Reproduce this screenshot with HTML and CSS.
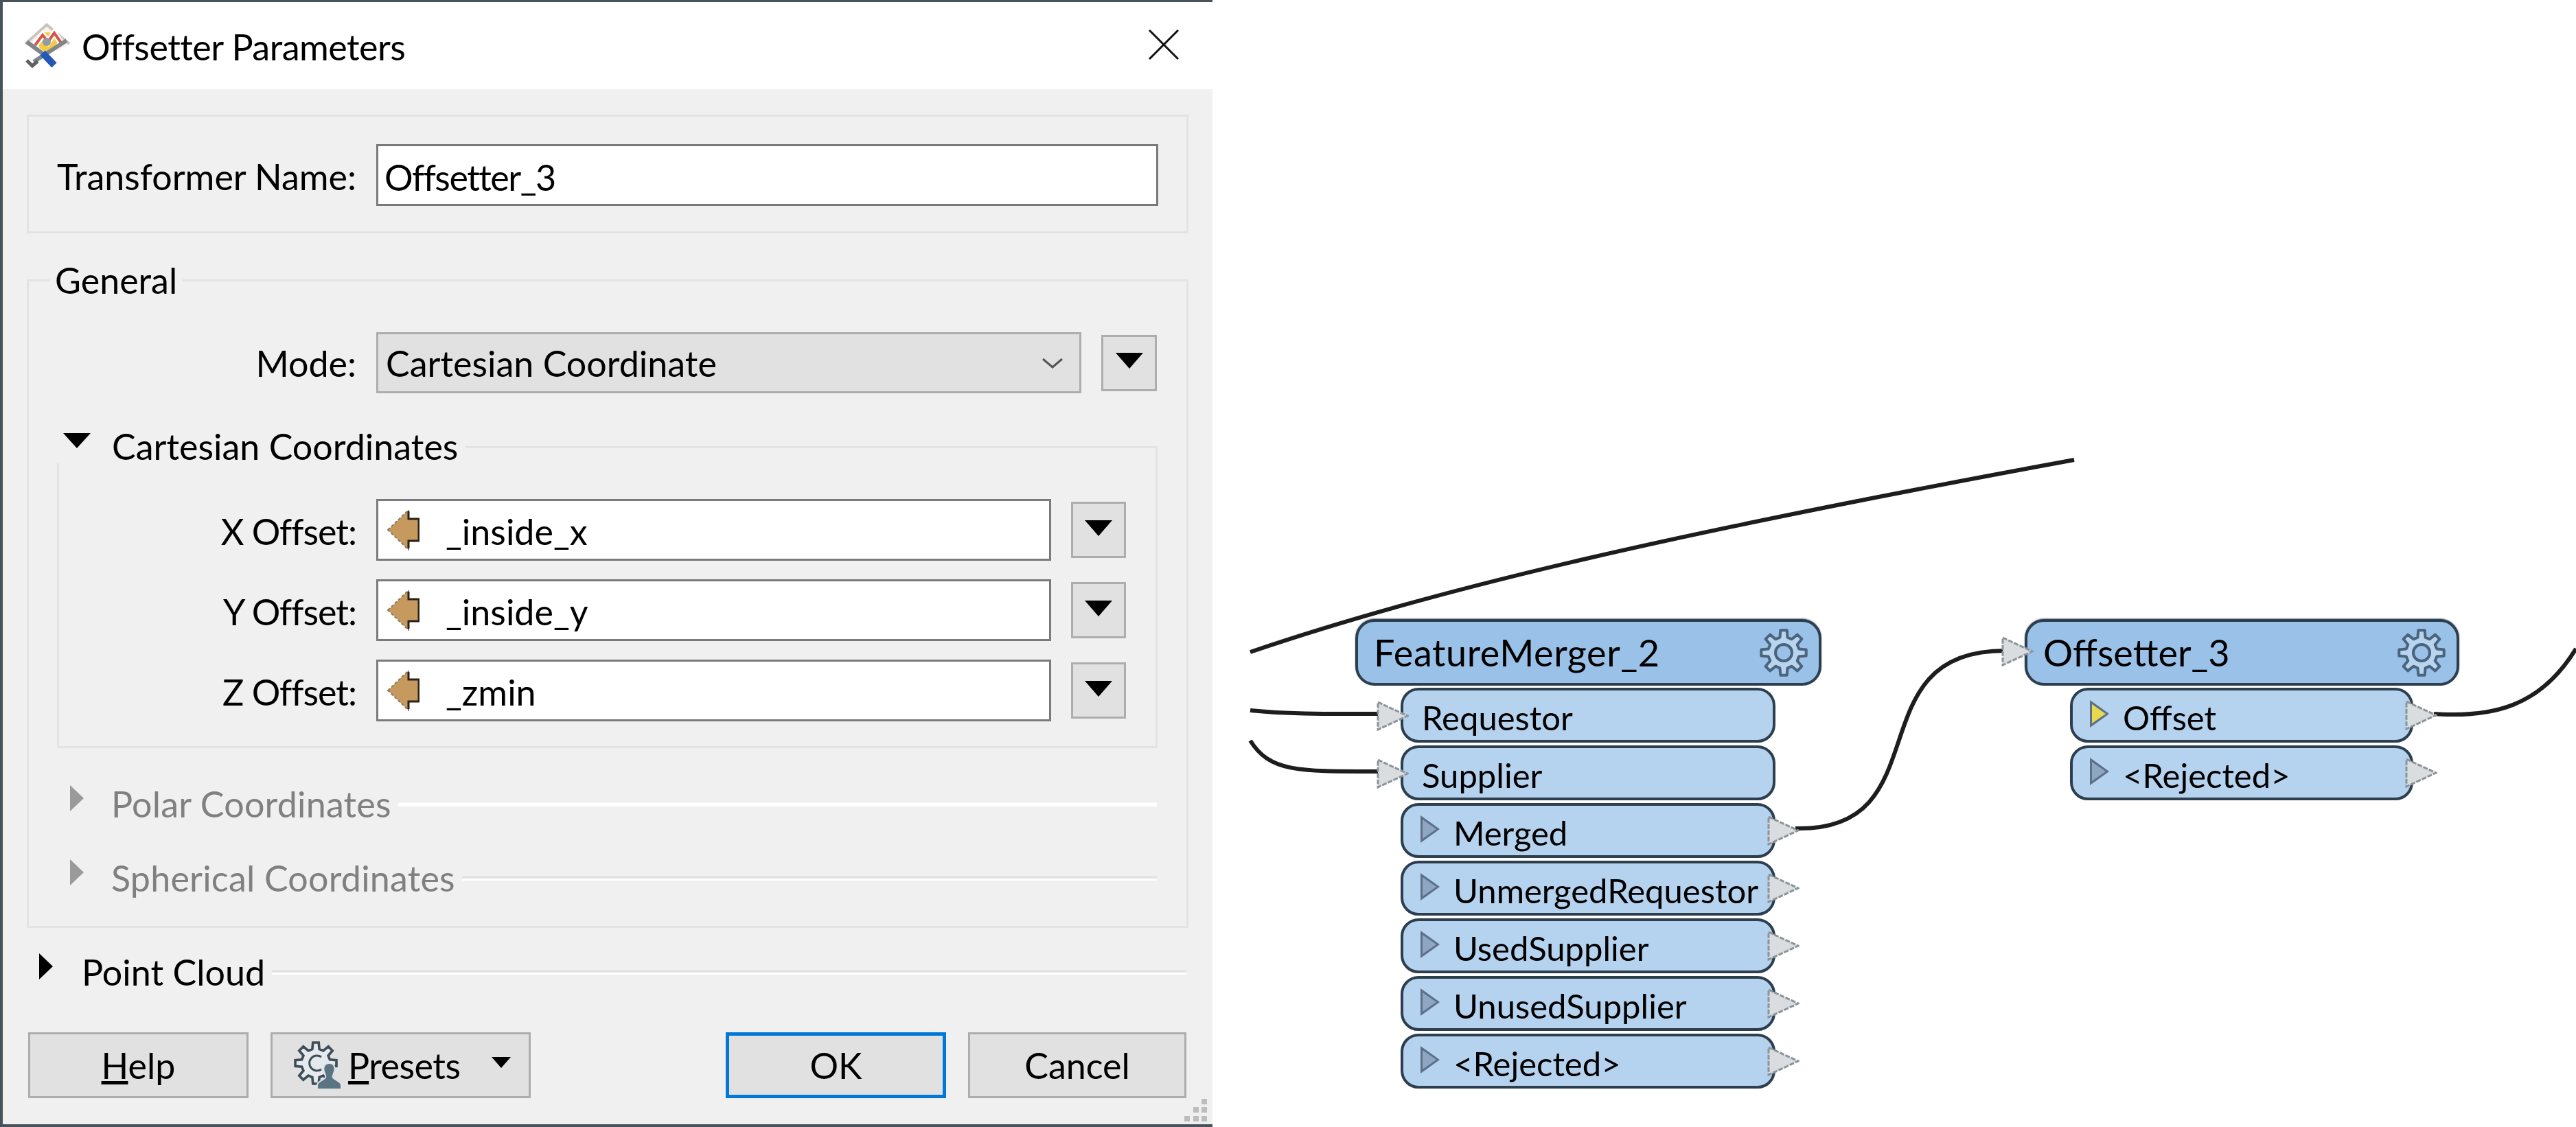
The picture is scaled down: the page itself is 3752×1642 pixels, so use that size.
FILE: index.html
```html
<!DOCTYPE html>
<html lang="en">
<head>
    <meta charset="UTF-8">
    <meta name="viewport" content="width=device-width, initial-scale=1.0">
    <title>Offsetter Parameters</title>
    <link rel="stylesheet" href="styles.css">
</head>
<body>

    <!-- Shared shapes -->
    <svg class="defs" aria-hidden="true">
        <symbol id="gear" viewBox="-36 -36 72 72">
            <path d="M-5.6 -22.3L-4.6 -32.7L4.6 -32.7L5.6 -22.3L11.8 -19.7L19.9 -26.4L26.4 -19.9L19.7 -11.8L22.3 -5.6L32.7 -4.6L32.7 4.6L22.3 5.6L19.7 11.8L26.4 19.9L19.9 26.4L11.8 19.7L5.6 22.3L4.6 32.7L-4.6 32.7L-5.6 22.3L-11.8 19.7L-19.9 26.4L-26.4 19.9L-19.7 11.8L-22.3 5.6L-32.7 4.6L-32.7 -4.6L-22.3 -5.6L-19.7 -11.8L-26.4 -19.9L-19.9 -26.4L-11.8 -19.7Z"/>
        </symbol>
        <symbol id="port" viewBox="0 0 47 44" preserveAspectRatio="none">
            <polygon points="2,2 45,22 2,42" fill="#d9dde0" stroke="#8b9499" stroke-width="3" stroke-dasharray="7 2"/>
        </symbol>
        <symbol id="attr" viewBox="0 0 47 60">
            <polygon points="1,30 31,1 31,14 46,14 46,46 31,46 31,59" fill="#c69a5f" stroke="#8a7860" stroke-width="2" stroke-dasharray="4 3"/>
            <polyline points="31,3 31,14 46,14 46,46 31,46 31,57" fill="none" stroke="#2a2118" stroke-width="3"/>
        </symbol>
    </svg>

    <div class="dialog">
        <div class="titlebar">
            <svg class="app-icon" viewBox="0 0 68 65">
                <path d="M2 30L33 2L66 30L50 40H16Z" fill="#f6f3ee"/>
                <circle cx="34" cy="27" r="14" fill="#f5cb45"/>
                <path d="M2 30L33 2L66 30" fill="none" stroke="#c9c5bd" stroke-width="4"/>
                <path d="M16 32L27 17L35 27L44 14L56 31" fill="none" stroke="#fff" stroke-width="9"/>
                <path d="M16 32L27 17L35 27L44 14L56 31" fill="none" stroke="#db5149" stroke-width="4"/>
                <path d="M4 27L27 44" stroke="#7f8589" stroke-width="6"/>
                <path d="M62 25L14 56" stroke="#80868a" stroke-width="6"/>
                <path d="M4 54L12 62L20 55" fill="none" stroke="#5c6165" stroke-width="5"/>
                <path d="M27 43L44 61" stroke="#2458b8" stroke-width="10"/>
                <circle cx="33" cy="27" r="6" fill="#8f9ba3"/>
            </svg>
            <span class="title">Offsetter Parameters</span>
            <svg class="close" viewBox="0 0 44 44">
                <path d="M1 1L43 43M43 1L1 43" stroke="#111" stroke-width="3"/>
            </svg>
        </div>

        <div class="dialog-body">
            <div class="name-group">
                <label class="name-label">Transformer Name:</label>
                <div class="input name-input">Offsetter_3</div>
            </div>

            <fieldset class="general">
                <legend>General</legend>

                <div class="mode-row">
                    <label>Mode:</label>
                    <div class="combo">
                        <span>Cartesian Coordinate</span>
                        <svg class="chevron" viewBox="0 0 32 16"><path d="M2 2L16 14L30 2" fill="none" stroke="#555" stroke-width="3"/></svg>
                    </div>
                    <button class="menu-btn"><i class="tri-down"></i></button>
                </div>

                <div class="section">
                    <div class="section-head">
                        <i class="tri-open"></i>
                        <span class="section-title">Cartesian Coordinates</span>
                        <span class="section-line"></span>
                    </div>
                    <div class="section-body">
                        <div class="coord-row">
                            <label>X Offset:</label>
                            <div class="input attr-input"><svg class="attr-icon"><use href="#attr"/></svg>_inside_x</div>
                            <button class="menu-btn"><i class="tri-down"></i></button>
                        </div>
                        <div class="coord-row">
                            <label>Y Offset:</label>
                            <div class="input attr-input"><svg class="attr-icon"><use href="#attr"/></svg>_inside_y</div>
                            <button class="menu-btn"><i class="tri-down"></i></button>
                        </div>
                        <div class="coord-row">
                            <label>Z Offset:</label>
                            <div class="input attr-input"><svg class="attr-icon"><use href="#attr"/></svg>_zmin</div>
                            <button class="menu-btn"><i class="tri-down"></i></button>
                        </div>
                    </div>
                </div>

                <div class="fold fold-polar">
                    <i class="tri-closed"></i>
                    <span class="fold-title">Polar Coordinates</span>
                    <span class="fold-line line-white"></span>
                </div>
                <div class="fold fold-spherical">
                    <i class="tri-closed"></i>
                    <span class="fold-title">Spherical Coordinates</span>
                    <span class="fold-line"></span>
                </div>
            </fieldset>

            <div class="cloud">
                <i class="tri-closed"></i>
                <span class="cloud-title">Point Cloud</span>
                <span class="fold-line"></span>
            </div>

            <div class="footer">
                <button class="btn btn-help"><u>H</u>elp</button>
                <button class="btn btn-presets">
                    <svg class="presets-icon" viewBox="0 0 70 70">
                        <use href="#gear" x="-1" y="-1" width="66" height="66" fill="#e3e9ed" stroke="#3f4d57" stroke-width="4"/>
                        <path d="M40 23A11 11 0 1 0 40 41" fill="none" stroke="#3f4d57" stroke-width="3"/>
                        <path d="M52 32C58 32 61 38 59 44C58 48 56 50 57 53C60 57 69 58 69 64V70H34V64C34 58 43 57 46 53C47 50 45 48 44 44C42 38 45 32 52 32Z" fill="#5b7483" stroke="#e1e1e1" stroke-width="2"/>
                    </svg>
                    <span class="presets-text"><u>P</u>resets</span>
                    <i class="tri-small"></i>
                </button>
                <button class="btn btn-ok">OK</button>
                <button class="btn btn-cancel">Cancel</button>
            </div>
        </div>

        <svg class="grip" viewBox="0 0 33 33">
            <rect x="25" y="0" width="8" height="8"/>
            <rect x="13" y="12" width="8" height="8"/>
            <rect x="25" y="12" width="8" height="8"/>
            <rect x="0" y="25" width="8" height="8"/>
            <rect x="13" y="25" width="8" height="8"/>
            <rect x="25" y="25" width="8" height="8"/>
        </svg>
    </div>

    <div class="canvas">
        <svg class="wires" viewBox="1766 0 1986 1642">
            <path d="M1821 950C2100 855 2450 775 3021 670"/>
            <path d="M1821 1035C1880 1041 1940 1040 2010 1040"/>
            <path d="M1821 1079C1850 1125 1890 1124 2010 1124"/>
            <path d="M2615 1207C2830 1212 2700 948 2920 948"/>
            <path d="M3545 1040C3630 1046 3700 1030 3752 945"/>
        </svg>

        <div class="node node-merger">
            <div class="node-head">
                <span>FeatureMerger_2</span>
                <svg class="node-gear" viewBox="-36 -36 72 72">
                    <use href="#gear" x="-36" y="-36" width="72" height="72"/>
                    <circle r="12"/>
                </svg>
            </div>
            <div class="ports">
                <div class="port port-in"><svg class="pin pin-in"><use href="#port"/></svg>Requestor</div>
                <div class="port port-in"><svg class="pin pin-in"><use href="#port"/></svg>Supplier</div>
                <div class="port"><i class="flag"></i>Merged<svg class="pin pin-out"><use href="#port"/></svg></div>
                <div class="port"><i class="flag"></i>UnmergedRequestor<svg class="pin pin-out"><use href="#port"/></svg></div>
                <div class="port"><i class="flag"></i>UsedSupplier<svg class="pin pin-out"><use href="#port"/></svg></div>
                <div class="port"><i class="flag"></i>UnusedSupplier<svg class="pin pin-out"><use href="#port"/></svg></div>
                <div class="port"><i class="flag"></i>&lt;Rejected&gt;<svg class="pin pin-out"><use href="#port"/></svg></div>
            </div>
        </div>

        <div class="node node-offsetter">
            <div class="node-head">
                <svg class="pin pin-head"><use href="#port"/></svg>
                <span>Offsetter_3</span>
                <svg class="node-gear" viewBox="-36 -36 72 72">
                    <use href="#gear" x="-36" y="-36" width="72" height="72"/>
                    <circle r="12"/>
                </svg>
            </div>
            <div class="ports">
                <div class="port"><i class="flag flag-on"></i>Offset<svg class="pin pin-out"><use href="#port"/></svg></div>
                <div class="port"><i class="flag"></i>&lt;Rejected&gt;<svg class="pin pin-out"><use href="#port"/></svg></div>
            </div>
        </div>
    </div>

</body>
</html>
```

FILE: styles.css
```css
* {
    box-sizing: border-box;
}
body {
    margin: 0;
    width: 3752px;
    height: 1642px;
    display: flex;
    overflow: hidden;
    background: #fff;
    font-family: Lato, "Open Sans", sans-serif;
    font-size: 52px;
    color: #000;
}
i {
    display: block;
    flex: none;
}
.defs {
    position: absolute;
    width: 0;
    height: 0;
}

/* Dialog */
.dialog {
    position: relative;
    flex: none;
    width: 1766px;
    height: 1642px;
    background: #f0f0f0;
    border-left: 4px solid #46525c;
    border-top: 3px solid #46525c;
    border-bottom: 4px solid #46525c;
}
.titlebar {
    height: 127px;
    background: #fff;
    display: flex;
    align-items: center;
    padding: 0 49px 0 31px;
}
.app-icon {
    width: 68px;
    height: 65px;
    margin-right: 16px;
}
.title {
    padding-top: 2px;
    letter-spacing: -0.5px;
}
.close {
    width: 44px;
    height: 44px;
    margin-left: auto;
    margin-top: -3px;
}
.dialog-body {
    padding: 37px 35px 0;
}
.input {
    background: #fff;
    border: 3px solid #7a7a7a;
    display: flex;
    align-items: center;
}
.name-group {
    height: 173px;
    border: 3px solid #e3e3e3;
    display: flex;
    align-items: center;
    padding-top: 3px;
}
.name-label {
    width: 477px;
    margin-right: 29px;
    padding-top: 4px;
    text-align: right;
}
.name-input {
    width: 1139px;
    height: 90px;
    padding: 6px 0 0 9px;
    letter-spacing: -1.5px;
}

/* General group */
.general {
    margin: 38px 0 0;
    padding: 46px 0 45px;
    border: 3px solid #e3e3e3;
    min-width: 0;
}
.general legend {
    margin-left: 30px;
    padding: 0 8px;
    line-height: 60px;
}
.mode-row {
    display: grid;
    grid-template-columns: 477px 1027px 81px;
    column-gap: 29px;
    align-items: center;
    height: 89px;
}
label {
    text-align: right;
}
.combo {
    height: 89px;
    background: #e1e1e1;
    border: 3px solid #adadad;
    display: flex;
    align-items: center;
    justify-content: space-between;
    padding: 0 23px 0 11px;
}
.chevron {
    width: 32px;
    height: 16px;
}
.menu-btn {
    height: 82px;
    padding: 0 0 6px;
    background: #e1e1e1;
    border: 3px solid #adadad;
    display: flex;
    align-items: center;
    justify-content: center;
}
.tri-down {
    width: 0;
    height: 0;
    border-left: 20px solid transparent;
    border-right: 20px solid transparent;
    border-top: 23px solid #000;
}

/* Cartesian section */
.section {
    margin: 52px 42px 0 41px;
}
.section-head {
    display: flex;
    height: 50px;
    align-items: center;
    padding-left: 9px;
}
.tri-open {
    width: 0;
    height: 0;
    border-left: 20px solid transparent;
    border-right: 20px solid transparent;
    border-top: 22px solid #000;
    margin: 0 31px 16px 0;
}
.section-line {
    flex: 1;
    align-self: stretch;
    margin: 25px 0 0 11px;
    border-top: 3px solid #e3e3e3;
    border-right: 3px solid #e3e3e3;
}
.section-body {
    height: 415px;
    padding-top: 52px;
    border: 3px solid #e3e3e3;
    border-top: 0;
    display: flex;
    flex-direction: column;
    gap: 27px;
}
.coord-row {
    display: grid;
    grid-template-columns: 433px 983px 80px;
    column-gap: 29px;
    align-items: center;
    height: 90px;
}
.coord-row label {
    padding-top: 3px;
    letter-spacing: -1px;
}
.attr-input {
    height: 90px;
    padding: 3px 0 0 13px;
}
.attr-icon {
    width: 47px;
    height: 60px;
    margin: -3px 38px 0 0;
}

/* Collapsed sections */
.fold,
.cloud {
    display: flex;
    height: 50px;
    align-items: center;
}
.fold {
    padding-left: 60px;
    margin-right: 43px;
}
.fold-polar {
    margin-top: 56px;
}
.fold-spherical {
    margin-top: 58px;
}
.tri-closed {
    width: 0;
    height: 0;
    border-top: 19px solid transparent;
    border-bottom: 19px solid transparent;
    border-left: 20px solid #9a9a9a;
    margin: 0 40px 16px 0;
}
.fold-title {
    color: #808080;
    letter-spacing: 0.2px;
}
.fold-line {
    flex: 1;
    margin-left: 10px;
    border-top: 4px solid #e3e3e3;
    border-bottom: 3px solid #fff;
}
.line-white {
    border-top: 1px solid #e3e3e3;
    border-bottom: 6px solid #fff;
}
.cloud {
    margin: 39px 3px 0 0;
    padding-left: 18px;
}
.cloud .tri-closed {
    border-left-color: #000;
    margin-right: 42px;
}

/* Footer buttons */
.footer {
    display: flex;
    margin-top: 63px;
    padding-left: 2px;
    gap: 32px;
}
.btn {
    height: 96px;
    background: #e1e1e1;
    border: 3px solid #adadad;
    font: inherit;
    padding: 0;
}
.btn-help {
    width: 321px;
}
.btn-presets {
    width: 379px;
    display: flex;
    align-items: center;
    padding-left: 31px;
}
.presets-icon {
    width: 70px;
    height: 70px;
    margin-right: 9px;
}
.presets-text {
    letter-spacing: -0.5px;
}
.tri-small {
    width: 0;
    height: 0;
    margin: -8px 26px 0 auto;
    border-left: 14px solid transparent;
    border-right: 14px solid transparent;
    border-top: 16px solid #000;
}
.btn-ok {
    width: 321px;
    margin-left: 252px;
    border: 5px solid #0078d7;
}
.btn-cancel {
    width: 318px;
}
.grip {
    position: absolute;
    right: 8px;
    bottom: 4px;
    width: 33px;
    height: 33px;
    fill: #bdbdbd;
}

/* Workspace */
.canvas {
    position: relative;
    flex: 1;
    background: #fff;
}
.wires {
    position: absolute;
    left: 0;
    top: 0;
    width: 1986px;
    height: 1642px;
    fill: none;
    stroke: #1d1d1d;
    stroke-width: 6px;
}
.node {
    position: absolute;
    top: 902px;
}
.node-merger {
    left: 208px;
    width: 679px;
}
.node-merger .node-head {
    letter-spacing: 0.6px;
}
.node-offsetter {
    left: 1183px;
    width: 633px;
}
.node-head {
    position: relative;
    height: 97px;
    background: #9ac1e8;
    border: 4px solid #2d3f4e;
    border-radius: 28px;
    box-shadow: 0 -1px 2px #7c8a95;
    display: flex;
    align-items: center;
    justify-content: space-between;
    padding: 0 15px 0 23px;
    font-size: 54px;
}
.node-gear {
    width: 72px;
    height: 72px;
    fill: #b9d4ee;
    stroke: #49647c;
    stroke-width: 4px;
    stroke-linejoin: round;
}
.node-gear circle {
    fill: #9ac1e8;
}
.ports {
    display: flex;
    flex-direction: column;
    gap: 4px;
    margin: 3px 0 0 66px;
}
.node-merger .ports {
    width: 546px;
}
.node-offsetter .ports {
    width: 500px;
}
.port {
    position: relative;
    height: 80px;
    background: #b5d2ee;
    border: 4px solid #2d3f4e;
    border-radius: 26px;
    display: flex;
    align-items: center;
    font-size: 49px;
    padding: 5px 0 0 25px;
}
.port-in {
    padding-left: 27px;
}
.flag {
    width: 28px;
    height: 40px;
    margin: -9px 20px 0 0;
    background: #5c7088;
    clip-path: polygon(0 0, 100% 50%, 0 100%);
    position: relative;
}
.flag::after {
    content: "";
    position: absolute;
    left: 3px;
    top: 6px;
    width: 20px;
    height: 28px;
    background: #8ea6c2;
    clip-path: polygon(0 0, 100% 50%, 0 100%);
}
.flag-on::after {
    background: #ead94c;
}
.pin {
    position: absolute;
    width: 47px;
    height: 44px;
}
.pin-in {
    left: -39px;
    top: 15px;
}
.pin-out {
    right: -39px;
    top: 14px;
}
.pin-head {
    left: -38px;
    top: 21px;
}
```
